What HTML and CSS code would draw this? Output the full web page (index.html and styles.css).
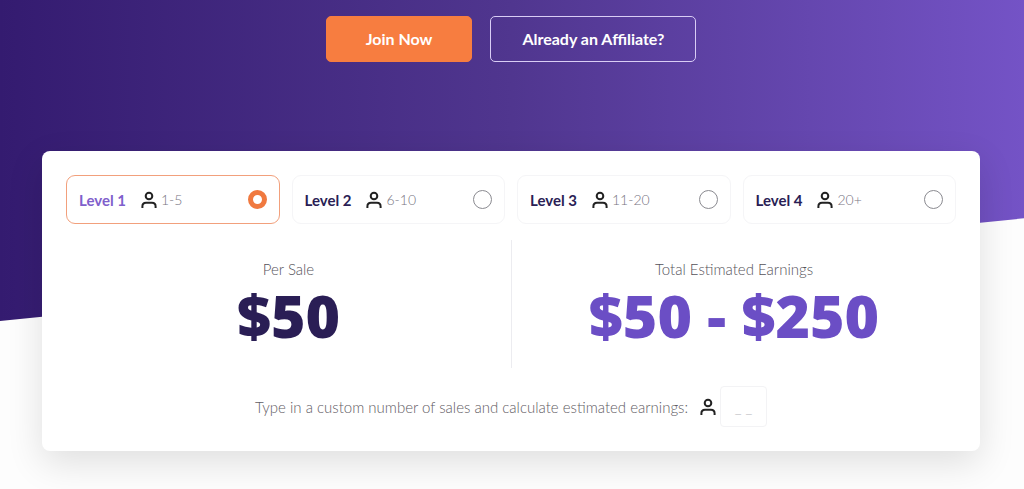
FILE: index.html
```html
<!DOCTYPE html>
<html lang="en">
<head>
    <meta charset="UTF-8">
    <meta name="viewport" content="width=device-width, initial-scale=1.0">
    <title>Affiliate Program</title>
    <link rel="stylesheet" href="styles.css">
</head>
<body>

<!-- Person icon shared by the levels and the custom field -->
<svg class="sprite" aria-hidden="true">
    <symbol id="person" viewBox="0 0 16 18">
        <circle cx="8" cy="5" r="3.3"/>
        <path d="M1.4 17v-1.6c0-2.2 1.6-3.6 3.6-3.6h6c2 0 3.6 1.4 3.6 3.6V17"/>
    </symbol>
</svg>

<main class="hero">
    <div class="actions">
        <a class="btn btn-primary" href="#join">Join Now</a>
        <a class="btn btn-outline" href="#login">Already an Affiliate?</a>
    </div>

    <form class="card">
        <div class="levels">
            <label class="level">
                <span class="level-name">Level 1</span>
                <svg class="person"><use href="#person"/></svg>
                <span class="level-range">1-5</span>
                <input type="radio" name="level" value="1" checked>
            </label>
            <label class="level">
                <span class="level-name">Level 2</span>
                <svg class="person"><use href="#person"/></svg>
                <span class="level-range">6-10</span>
                <input type="radio" name="level" value="2">
            </label>
            <label class="level">
                <span class="level-name">Level 3</span>
                <svg class="person"><use href="#person"/></svg>
                <span class="level-range">11-20</span>
                <input type="radio" name="level" value="3">
            </label>
            <label class="level">
                <span class="level-name">Level 4</span>
                <svg class="person"><use href="#person"/></svg>
                <span class="level-range">20+</span>
                <input type="radio" name="level" value="4">
            </label>
        </div>

        <div class="results">
            <div class="result">
                <p class="result-label">Per Sale</p>
                <p class="amount">$50</p>
            </div>
            <div class="result result-total">
                <p class="result-label">Total Estimated Earnings</p>
                <p class="amount">$50 - $250</p>
            </div>
        </div>

        <div class="custom">
            <label for="sales">Type in a custom number of sales and calculate estimated earnings:</label>
            <svg class="person"><use href="#person"/></svg>
            <input type="text" id="sales" placeholder="_ _" inputmode="numeric">
        </div>
    </form>
</main>

</body>
</html>
```
FILE: styles.css
```css
* {
    box-sizing: border-box;
}

body {
    margin: 0;
    background-color: #fdfdfd;
    color: #2a1e55;
    font-family: Lato, sans-serif;
    font-size: 15px;
}

p {
    margin: 0;
}

.sprite {
    display: none;
}

.hero {
    position: relative;
    padding: 16px 44px 38px 42px;
}

/* Slanted purple background */
.hero::before {
    content: "";
    position: absolute;
    inset: 0 0 auto;
    z-index: -1;
    height: 321px;
    background: linear-gradient(90deg, #341b70, #50368f 50%, #7453c6);
    clip-path: polygon(0 0, 100% 0, 100% 68%, 0 100%);
}

.actions {
    display: flex;
    justify-content: center;
    gap: 18px;
    margin-bottom: 89px;
}

.btn {
    padding: 0 31px;
    border: 1px solid #d9cdf5;
    border-radius: 5px;
    color: #fff;
    font-size: 16px;
    font-weight: 700;
    line-height: 44px;
    text-decoration: none;
}

.btn-primary {
    padding: 0 39px;
    border-color: #f77d40;
    background-color: #f77d40;
}

.card {
    padding: 24px;
    border-radius: 8px;
    background-color: #fff;
    box-shadow: 0 12px 36px rgba(0, 0, 0, 0.12);
}

.levels {
    display: grid;
    grid-template-columns: repeat(4, 1fr);
    gap: 12px;
}

.level {
    display: flex;
    align-items: center;
    height: 49px;
    padding: 0 12px;
    border: 1px solid #f5f5f7;
    border-radius: 9px;
    cursor: pointer;
}

.level:has(input:checked) {
    border-color: #f2a07c;
}

.level:has(input:checked) .level-name {
    color: #7f60cc;
}

.level-name {
    font-weight: 700;
}

.person {
    width: 16px;
    height: 18px;
    fill: none;
    stroke: #222;
    stroke-width: 2;
}

.level .person {
    margin: 0 4px 0 15px;
}

.level-range {
    color: #77747f;
    font-size: 14px;
    font-weight: 300;
}

.level input {
    width: 19px;
    height: 19px;
    margin: 0 0 0 auto;
    border: 1px solid #8a8a90;
    border-radius: 50%;
    appearance: none;
}

.level input:checked {
    border: 5px solid #f0793f;
}

.results {
    display: grid;
    grid-template-columns: 1fr 1fr;
    margin: 16px 0 18px;
    text-align: center;
}

.result {
    height: 128px;
    padding-top: 19px;
}

.result-total {
    border-left: 1px solid #ececf0;
}

.result-label {
    color: #55535a;
    font-size: 15px;
    font-weight: 300;
    line-height: 20px;
}

.amount {
    font-family: "Open Sans", sans-serif;
    font-size: 59px;
    font-weight: 800;
    line-height: 72px;
}

.result-total .amount {
    color: #6b4ec5;
}

.custom {
    display: flex;
    align-items: center;
    justify-content: center;
    color: #5f5d64;
    font-weight: 300;
}

.custom .person {
    margin: 0 4px 0 12px;
}

.custom input {
    width: 47px;
    height: 41px;
    border: 1px solid #f3f3f5;
    border-radius: 4px;
    font: inherit;
    text-align: center;
}

.custom input::placeholder {
    color: #b5b5ba;
}
```
